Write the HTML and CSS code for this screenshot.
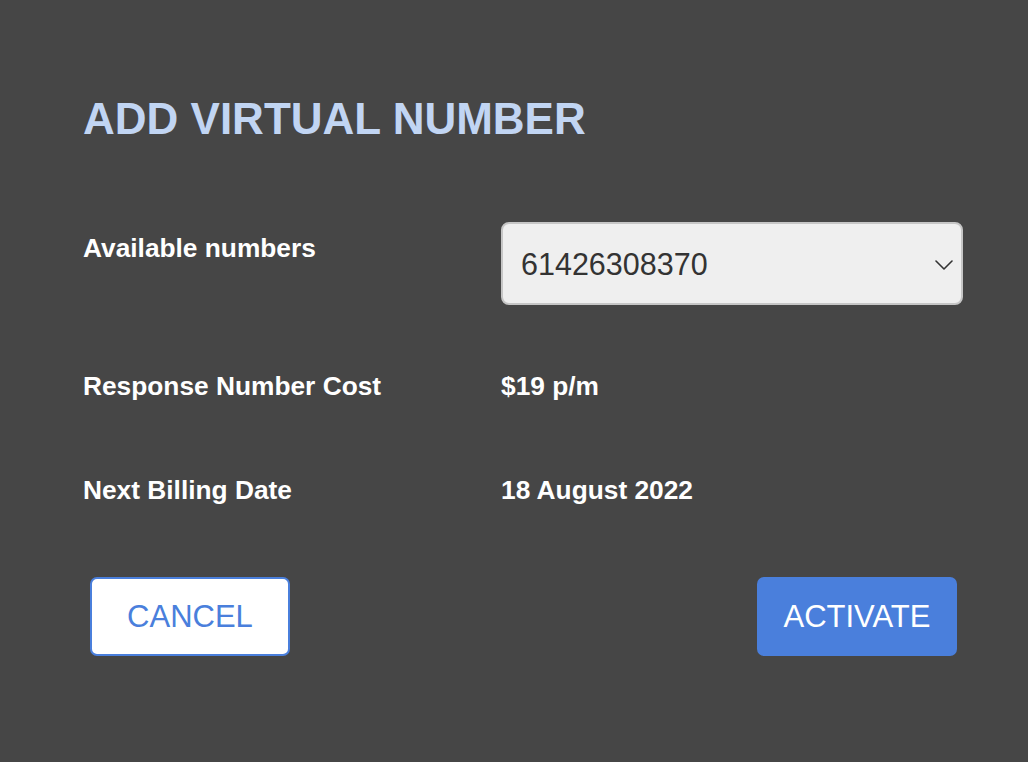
FILE: index.html
```html
<!DOCTYPE html>
<html lang="en">
<head>
<meta charset="utf-8">
<title>Add Virtual Number</title>
<link rel="stylesheet" href="styles.css">
</head>
<body>
<main class="dialog">
  <h1 class="dialog-title">ADD VIRTUAL NUMBER</h1>
  <div class="details">
    <div class="label label-top">Available numbers</div>
    <div class="select-wrap">
      <select class="number-select">
        <option>61426308370</option>
      </select>
      <svg class="chevron" width="18" height="10" viewBox="0 0 18 10" aria-hidden="true">
        <path d="M1 1 L9 9 L17 1" fill="none" stroke="#333" stroke-width="1.6" stroke-linecap="round" stroke-linejoin="round"/>
      </svg>
    </div>
    <div class="label">Response Number Cost</div>
    <div class="value">$19 p/m</div>
    <div class="label row-last">Next Billing Date</div>
    <div class="value row-last">18 August 2022</div>
  </div>
  <div class="actions">
    <button class="btn btn-outline" type="button">CANCEL</button>
    <button class="btn btn-primary" type="button">ACTIVATE</button>
  </div>
</main>
</body>
</html>
```
FILE: styles.css
```css
html, body {
  margin: 0;
  padding: 0;
  background: #464646;
}
body {
  font-family: "Liberation Sans", Arial, sans-serif;
  width: 1028px;
  height: 762px;
  overflow: hidden;
}
.dialog {
  padding: 93px 65px 0 83px;
}
.dialog-title {
  margin: 0;
  font-size: 44px;
  line-height: 52px;
  font-weight: 700;
  color: #c1d5f3;
}
.details {
  margin-top: 77px;
  display: grid;
  grid-template-columns: 418px 1fr;
  row-gap: 65px;
  align-items: start;
}
.label, .value {
  font-size: 26.3px;
  line-height: 32px;
  font-weight: 700;
  color: #ffffff;
}
.label-top {
  padding-top: 10px;
}
.row-last {
  margin-top: 7px;
}
.select-wrap {
  position: relative;
}
.number-select {
  appearance: none;
  -webkit-appearance: none;
  display: block;
  width: 100%;
  height: 83px;
  box-sizing: border-box;
  margin: 0;
  padding: 0 40px 0 18px;
  border: 2px solid #c6c6c6;
  border-radius: 8px;
  background: #efefef;
  color: #333333;
  font-family: "Liberation Sans", Arial, sans-serif;
  font-size: 30.5px;
  outline: none;
}
.chevron {
  position: absolute;
  right: 10px;
  top: 38px;
  pointer-events: none;
}
.actions {
  margin-top: 71px;
  padding: 0 6px 0 7px;
  display: flex;
  justify-content: space-between;
}
.btn {
  width: 200px;
  height: 79px;
  box-sizing: border-box;
  border-radius: 7px;
  font-family: "Liberation Sans", Arial, sans-serif;
  font-size: 31px;
  line-height: 31px;
  display: flex;
  align-items: center;
  justify-content: center;
  padding: 0;
  cursor: pointer;
}
.btn-outline {
  background: #ffffff;
  border: 2px solid #4a7fdc;
  color: #4a7fdc;
}
.btn-primary {
  background: #4a7fdc;
  border: none;
  color: #ffffff;
}
```
